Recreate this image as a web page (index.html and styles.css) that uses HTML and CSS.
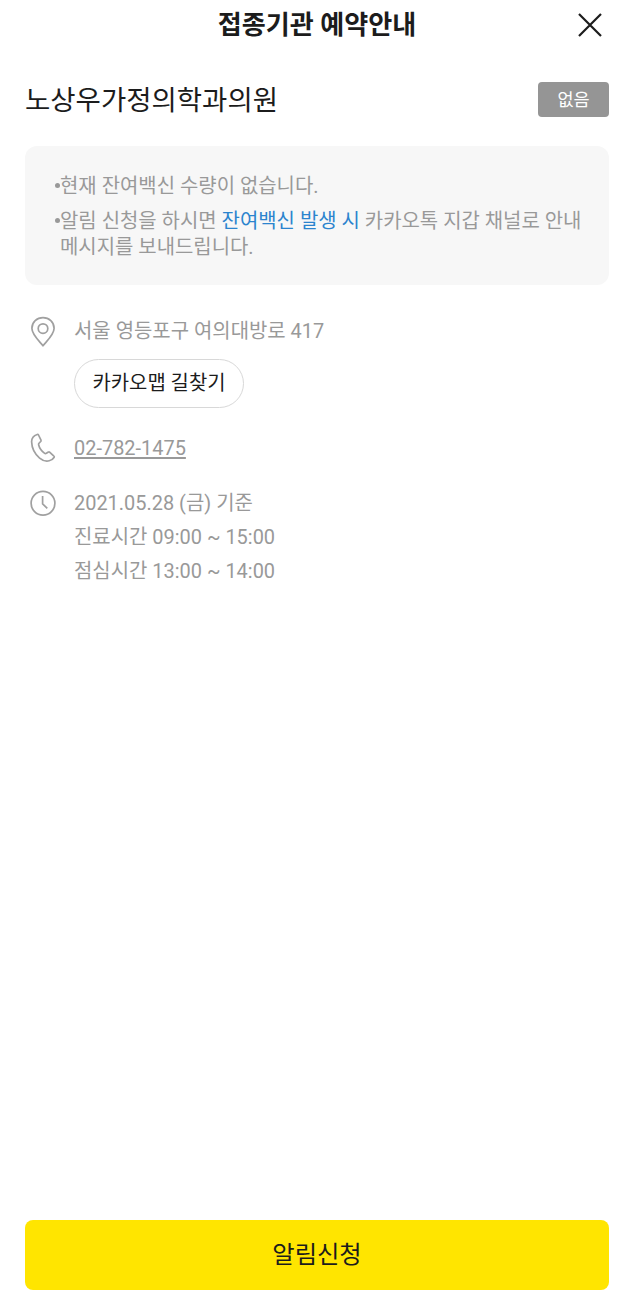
FILE: index.html
```html
<!DOCTYPE html>
<html lang="ko">
<head>
	<meta charset="UTF-8">
	<title>접종기관 예약안내</title>
	<link rel="stylesheet" href="styles.css">
</head>

<body>
	<div id="main">
		<header class="header">
			<h1>접종기관 예약안내</h1>
			<button class="close" type="button" aria-label="닫기">
				<svg width="24" height="24" viewBox="0 0 24 24">
					<path d="M1 1L23 23M23 1L1 23"/>
				</svg>
			</button>
		</header>

		<div class="clinic">
			<h2>노상우가정의학과의원</h2>
			<span class="badge">없음</span>
		</div>

		<ul class="notice">
			<li>현재 잔여백신 수량이 없습니다.</li>
			<li>알림 신청을 하시면 <em>잔여백신 발생 시</em> 카카오톡 지갑 채널로 안내 메시지를 보내드립니다.</li>
		</ul>

		<ul class="info">
			<li class="address">
				<svg class="icon" width="26" height="32" viewBox="0 0 26 32">
					<path d="M13 29.8C10.5 26.2 1.9 19 1.9 12.3C1.9 6 6.9 1.6 13 1.6S24.1 6 24.1 12.3C24.1 19 15.5 26.2 13 29.8Z"/>
					<circle cx="13" cy="12.6" r="4.8"/>
				</svg>
				<div class="text">
					<p>서울 영등포구 여의대방로 417</p>
					<button class="map" type="button">카카오맵 길찾기</button>
				</div>
			</li>
			<li class="phone">
				<svg class="icon" width="26" height="32" viewBox="0 0 26 32">
					<path d="M7.2 2.5C4 3.5 1.6 6 1.6 9.8C1.8 15.8 5 22.2 9.6 26.1C12.6 28.6 16 29.6 19.2 28.8C21.5 28.2 23.2 26.9 24.2 25.2C24.4 24.8 24.3 24.4 23.9 24.1L19.6 20.1C19.2 19.8 18.8 19.8 18.4 20.1L16.4 21.3C15.7 21.7 15 21.6 14.4 21.1C11.7 19.1 9.4 15.8 8.6 12.7C8.4 11.9 8.7 11.3 9.3 10.8L10.7 9.5C11.1 9.1 11.2 8.7 11 8.2L8.5 3C8.2 2.5 7.8 2.3 7.2 2.5Z"/>
				</svg>
				<a class="text" href="tel:02-782-1475">02-782-1475</a>
			</li>
			<li class="hours">
				<svg class="icon" width="26" height="32" viewBox="0 0 26 32">
					<circle cx="13" cy="16.3" r="11.9"/>
					<path d="M12.6 9V16.9L17.3 21.4"/>
				</svg>
				<div class="text">
					<p>2021.05.28 (금) 기준</p>
					<p>진료시간 09:00 ~ 15:00</p>
					<p>점심시간 13:00 ~ 14:00</p>
				</div>
			</li>
		</ul>

		<button class="apply" type="button">알림신청</button>
	</div>
</body>
</html>
```

FILE: styles.css
```css
*
{
	margin: 0px;
	padding: 0px;
	box-sizing: border-box;
}
body
{
	background: #FFFFFF;
	color: #1C1C1C;
	font-family: Roboto, "Noto Sans CJK KR", sans-serif;
}
ul
{
	list-style: none;
}
button
{
	border: 0px;
	background: none;
	color: inherit;
	font-family: inherit;
	cursor: pointer;
}
#main
{
	display: flex;
	flex-direction: column;
	height: 1309px;
	padding: 0px 23px 19px 25px;
}

/* header */
.header
{
	display: grid;
	grid-template-columns: 24px 1fr 24px;
	align-items: center;
	height: 50px;
	padding-right: 7px;
}
.header h1
{
	grid-column: 2;
	padding-left: 7px;
	font-size: 26.1px;
	line-height: 36px;
	font-weight: bold;
	text-align: center;
}
.close
{
	width: 24px;
	height: 24px;
}
.close svg
{
	display: block;
	fill: none;
	stroke: #1C1C1C;
	stroke-width: 2.2;
}

/* clinic */
.clinic
{
	display: flex;
	justify-content: space-between;
	align-items: flex-start;
	height: 36px;
	margin-top: 32px;
}
.clinic h2
{
	padding-top: 1px;
	font-size: 27.5px;
	line-height: 36px;
	font-weight: normal;
}
.badge
{
	width: 71px;
	height: 35px;
	border-radius: 4px;
	background: #959595;
	color: #FFFFFF;
	font-size: 17.5px;
	line-height: 37px;
	text-align: center;
}

/* notice */
.notice
{
	height: 139px;
	margin-top: 28px;
	padding: 27px 20px 0px 35px;
	border-radius: 12px;
	background: #F7F7F7;
	color: #999999;
	font-size: 19.95px;
	line-height: 26px;
}
.notice li
{
	position: relative;
	margin-bottom: 9px;
}
.notice li:before
{
	content: "";
	position: absolute;
	left: -5px;
	top: 10px;
	width: 5px;
	height: 5px;
	border-radius: 50%;
	background: #999999;
}
.notice em
{
	color: #2B84CE;
	font-style: normal;
}

/* address, phone, hours */
.info
{
	padding: 29px 0px 0px 5px;
	color: #999999;
	font-size: 19.95px;
	line-height: 34px;
}
.info li
{
	display: flex;
	gap: 18px;
}
.icon
{
	flex: none;
	margin-top: 1px;
	fill: none;
	stroke: #A0A0A0;
	stroke-width: 1.7;
	stroke-linejoin: round;
}
.address .icon
{
	margin-top: 2px;
}
.address .text p
{
	margin-bottom: 11px;
}
.map
{
	display: block;
	width: 170px;
	height: 49px;
	padding-bottom: 4px;
	border: 1px solid #D8D8D8;
	border-radius: 25px;
	color: #1C1C1C;
	font-size: 19.9px;
}
.phone
{
	margin-top: 23px;
}
.phone a
{
	color: inherit;
	text-underline-offset: 2px;
	text-decoration-thickness: 1.5px;
}
.hours
{
	margin-top: 21px;
}

/* bottom button */
.apply
{
	height: 70px;
	margin-top: auto;
	padding-bottom: 5px;
	border-radius: 8px;
	background: #FFE500;
	font-size: 24.3px;
}
```
